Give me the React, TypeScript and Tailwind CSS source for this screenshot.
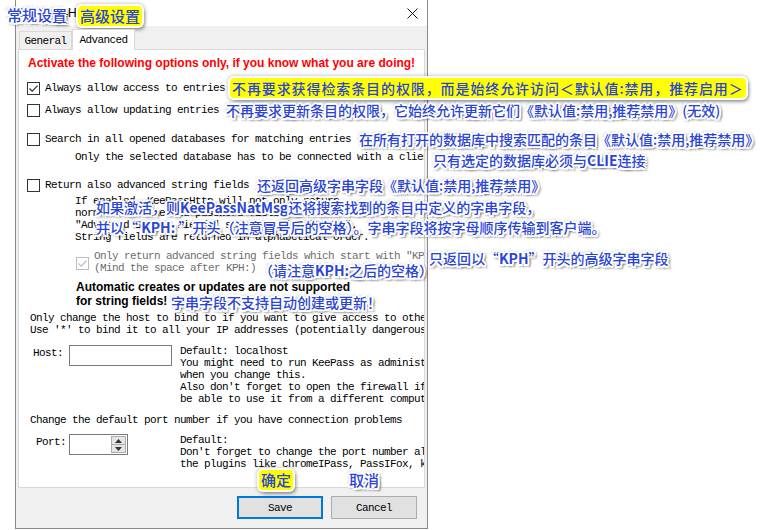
import React from "react";

const HALO =
  "[text-shadow:2px_0_0_#fff,-2px_0_0_#fff,0_2px_0_#fff,0_-2px_0_#fff,1.5px_1.5px_0_#fff,-1.5px_-1.5px_0_#fff,1.5px_-1.5px_0_#fff,-1.5px_1.5px_0_#fff,3px_3px_2px_rgba(0,0,0,0.45),3px_0_2px_rgba(0,0,0,0.3),0_3px_2px_rgba(0,0,0,0.3),-2px_-2px_3px_rgba(0,0,0,0.2)]";
const MARK = "rounded-[4px] bg-[#ffff00] shadow-[0_0_0_2px_#fff,0_0_4px_2px_rgba(0,0,0,0.3),2px_3px_4px_rgba(0,0,0,0.45)]";
const NOTE =
  "absolute whitespace-nowrap px-[2px] font-['Noto_Sans_CJK_SC',sans-serif] text-[14px] font-medium leading-[20px] text-[#2a45d6]";

function Check({ checked = false, disabled = false }: { checked?: boolean; disabled?: boolean }) {
  return (
    <span
      className={`flex h-[13px] w-[13px] shrink-0 items-center justify-center border bg-white ${
        disabled ? "border-[#bcbcbc]" : "border-[#333333]"
      }`}
    >
      {checked && (
        <svg width="11" height="11" viewBox="0 0 11 11">
          <path
            d="M1.5 5.5 L4.2 8.2 L9.6 2.6"
            fill="none"
            stroke={disabled ? "#bcbcbc" : "#333333"}
            strokeWidth="1.2"
          />
        </svg>
      )}
    </span>
  );
}

function Dialog() {
  return (
    <div className="ml-[15px] flex h-[529px] w-[413px] flex-col border-x border-b border-[#888888] font-['Liberation_Mono',monospace] text-[11px] leading-[12px] tracking-[-0.6px] text-black">
      {/* title bar */}
      <div className="flex h-[26px] shrink-0 items-center bg-white">
        <span className="pl-[4px] font-['Liberation_Sans',Arial,sans-serif] text-[12px] tracking-normal">
          KeePassHttp Options
        </span>
        <svg className="ml-auto mr-[9px]" width="11" height="11" viewBox="0 0 11 11">
          <path d="M0.5 0.5 L10.5 10.5 M10.5 0.5 L0.5 10.5" stroke="#111" strokeWidth="1" />
        </svg>
      </div>

      <div className="flex flex-1 flex-col bg-[#f0f0f0] pt-[3px]">
        {/* tabs */}
        <div className="ml-[3px] flex h-[20px] items-end">
          <div className="flex h-[18px] w-[53px] items-center justify-center border border-b-0 border-[#d9d9d9] bg-[#f0f0f0]">
            General
          </div>
          <div className="relative z-10 -mb-px flex h-[21px] w-[63px] items-center justify-center border border-b-0 border-[#d9d9d9] bg-white">
            Advanced
          </div>
        </div>

        {/* panel */}
        <div className="mx-[2px] flex h-[439px] flex-col overflow-hidden whitespace-nowrap border border-[#d9d9d9] bg-white">
          <div className="ml-[9px] mt-[6px] h-[14px] font-['Liberation_Sans',Arial,sans-serif] text-[12px] font-bold leading-[14px] tracking-normal text-[#ff0000]">
            Activate the following options only, if you know what you are doing!
          </div>

          <div className="ml-[8px] mt-[10px] flex h-[16px] items-center">
            <Check checked />
            <span className="ml-[5px]">Always allow access to entries</span>
          </div>
          <div className="ml-[8px] mt-[6px] flex h-[16px] items-center">
            <Check />
            <span className="ml-[5px]">Always allow updating entries</span>
          </div>
          <div className="ml-[8px] mt-[13px] flex h-[16px] items-center">
            <Check />
            <span className="ml-[5px]">Search in all opened databases for matching entries</span>
          </div>
          <div className="ml-[56px] mt-[4px]">Only the selected database has to be connected with a client.</div>

          <div className="ml-[8px] mt-[14px] flex h-[16px] items-center">
            <Check />
            <span className="ml-[5px]">Return also advanced string fields</span>
          </div>
          <div className="ml-[56px] mt-[2px]">
            <div>If enabled, KeePassHttp will not only return</div>
            <div>normal username and password fields, but also the</div>
            <div>"Advanced String Fields" starting with "KPH: ".</div>
            <div>String fields are returned in alphabetical order.</div>
          </div>

          <div className="ml-[57px] mt-[7px] flex text-[#6d6d6d]">
            <div className="mt-[7px]">
              <Check checked disabled />
            </div>
            <div className="ml-[5px]">
              <div>Only return advanced string fields which start with "KPH: "</div>
              <div>(Mind the space after KPH:)</div>
            </div>
          </div>

          <div className="ml-[57px] mt-[6px] font-['Liberation_Sans',Arial,sans-serif] text-[12px] font-bold leading-[14px] tracking-normal">
            <div>Automatic creates or updates are not supported</div>
            <div>for string fields!</div>
          </div>

          <div className="ml-[11px] mt-[4px]">
            <div>Only change the host to bind to if you want to give access to other computers.</div>
            <div>Use '*' to bind it to all your IP addresses (potentially dangerous!)</div>
          </div>

          <div className="ml-[14px] mt-[9px] flex">
            <div className="mt-[2px] w-[36px] shrink-0">Host:</div>
            <div className="h-[21px] w-[103px] shrink-0 border border-[#7a7a7a] bg-white" />
            <div className="ml-[8px] shrink-0">
              <div>Default: localhost</div>
              <div>You might need to run KeePass as administrator</div>
              <div>when you change this.</div>
              <div>Also don't forget to open the firewall if you want to</div>
              <div>be able to use it from a different computer.</div>
            </div>
          </div>

          <div className="ml-[11px] mt-[9px]">Change the default port number if you have connection problems</div>

          <div className="ml-[17px] mt-[8px] flex">
            <div className="mt-[2px] w-[33px] shrink-0">Port:</div>
            <div className="flex h-[21px] w-[59px] shrink-0 justify-end border border-[#7a7a7a] bg-white p-px">
              <div className="flex w-[15px] flex-col">
                <div className="flex flex-1 items-center justify-center border border-[#adadad] bg-[#e5e5e5]">
                  <svg width="7" height="4" viewBox="0 0 7 4">
                    <path d="M0 4 L3.5 0 L7 4 Z" fill="#333" />
                  </svg>
                </div>
                <div className="-mt-px flex flex-1 items-center justify-center border border-[#adadad] bg-[#e5e5e5]">
                  <svg width="7" height="4" viewBox="0 0 7 4">
                    <path d="M0 0 L3.5 4 L7 0 Z" fill="#333" />
                  </svg>
                </div>
              </div>
            </div>
            <div className="ml-[52px] shrink-0">
              <div>Default:</div>
              <div>Don't forget to change the port number also in</div>
              <div>the plugins like chromeIPass, PassIFox, kypass and others.</div>
            </div>
          </div>
        </div>

        {/* buttons */}
        <div className="mt-[8px] flex justify-end gap-[8px] pr-[10px]">
          <button className="flex h-[23px] w-[86px] items-center justify-center border-2 border-[#0078d7] bg-[#e1e1e1]">
            Save
          </button>
          <button className="flex h-[23px] w-[86px] items-center justify-center border border-[#adadad] bg-[#e1e1e1]">
            Cancel
          </button>
        </div>
      </div>
    </div>
  );
}

export default function App() {
  return (
    <div className="relative h-[530px] w-[782px] overflow-hidden bg-white">
      <Dialog />

      <div className={`${NOTE} ${HALO} left-[5px] top-[5px] text-[15px]`}>常规设置</div>
      <div className={`${NOTE} ${MARK} left-[78px] top-[6px] text-[15px]`}>高级设置</div>

      <div className={`${NOTE} ${MARK} left-[230px] top-[78px] tracking-[0.9px]`}>
        不再要求获得检索条目的权限，而是始终允许访问＜默认值:禁用，推荐启用＞
      </div>
      <div className={`${NOTE} ${HALO} left-[224px] top-[100px]`}>
        不再要求更新条目的权限，它始终允许更新它们《默认值:禁用,推荐禁用》(无效)
      </div>
      <div className={`${NOTE} ${HALO} left-[357px] top-[129px]`}>
        在所有打开的数据库中搜索匹配的条目《默认值:禁用,推荐禁用》
      </div>
      <div className={`${NOTE} ${HALO} left-[431px] top-[150px]`}>
        只有选定的数据库必须与<b>CLIE</b>连接
      </div>
      <div className={`${NOTE} ${HALO} left-[255px] top-[175px]`}>
        还返回高级字串字段《默认值:禁用,推荐禁用》
      </div>
      <div className={`${NOTE} ${HALO} left-[94px] top-[197px] leading-[16px]`}>
        <div>
          如果激活，则<b>KeePassNatMsg</b>还将搜索找到的条目中定义的字串字段，
        </div>
        <div>
          并以“ <b>KPH:</b> ”开头（注意冒号后的空格）。字串字段将按字母顺序传输到客户端。
        </div>
      </div>
      <div className={`${NOTE} ${HALO} left-[427px] top-[248px]`}>
        只返回以“<b>KPH</b>”开头的高级字串字段
      </div>
      <div className={`${NOTE} ${HALO} left-[257px] top-[260px]`}>
        （请注意<b>KPH:</b>之后的空格）
      </div>
      <div className={`${NOTE} ${HALO} left-[169px] top-[292px]`}>字串字段不支持自动创建或更新！</div>

      <div className={`${NOTE} ${MARK} left-[259px] top-[470px] text-[15px]`}>确定</div>
      <div className={`${NOTE} ${HALO} left-[347px] top-[470px] text-[15px]`}>取消</div>
    </div>
  );
}
